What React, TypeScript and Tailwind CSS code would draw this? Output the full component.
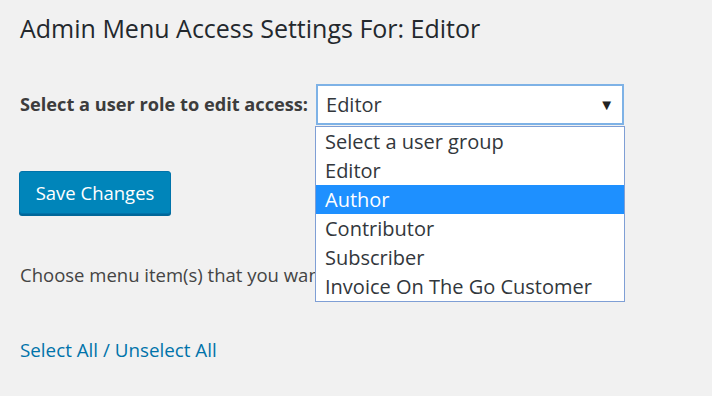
const roles = ['Select a user group', 'Editor', 'Author', 'Contributor', 'Subscriber', 'Invoice On The Go Customer'];

export default function App() {
  return (
    <div className="w-[712px] h-[396px] bg-[#f1f1f1] overflow-hidden text-[#23282d]" style={{ fontFamily: '"Open Sans", "Noto Sans", sans-serif' }}>
      <div className="px-5 pt-[11px]">
        <h1 className="text-[25px] leading-[34px] font-normal text-[#23282d]">Admin Menu Access Settings For: Editor</h1>

        <div className="mt-[39px] flex items-center gap-[8px]">
          <label className="text-[18.2px] font-bold text-[#3c3c3c]">Select a user role to edit access:</label>
          <div className="relative">
            <div className="w-[308px] h-[41px] bg-white border-2 border-[#7eb2e6] flex items-center justify-between pl-[8px] pr-[8px] text-[20px] text-[#32373c]">
              <span>Editor</span>
              <span className="text-[15px] text-[#222]">▼</span>
            </div>
            <ul className="absolute left-[-1px] top-[42px] w-[310px] bg-white border border-[#7f9fd5] text-[20px] leading-[29px] text-[#32373c] z-10">
              {roles.map((r) => (
                <li key={r} className={r === 'Author' ? 'bg-[#1e90ff] text-white pl-[9px]' : 'pl-[9px]'}>
                  {r}
                </li>
              ))}
            </ul>
          </div>
        </div>

        <button className="mt-[46px] -ml-px h-[43px] w-[152px] rounded-[3px] bg-[#0085ba] border border-[#0073aa] shadow-[0_2px_0_#006799] text-white text-[18.5px]">
          Save Changes
        </button>

        <p className="mt-[47px] text-[18.5px] text-[#444]">Choose menu item(s) that you want to give access to this role.</p>

        <p className="mt-[47px] text-[18.8px] text-[#0073aa]">
          <a>Select All</a> / <a>Unselect All</a>
        </p>
      </div>
    </div>
  );
}
